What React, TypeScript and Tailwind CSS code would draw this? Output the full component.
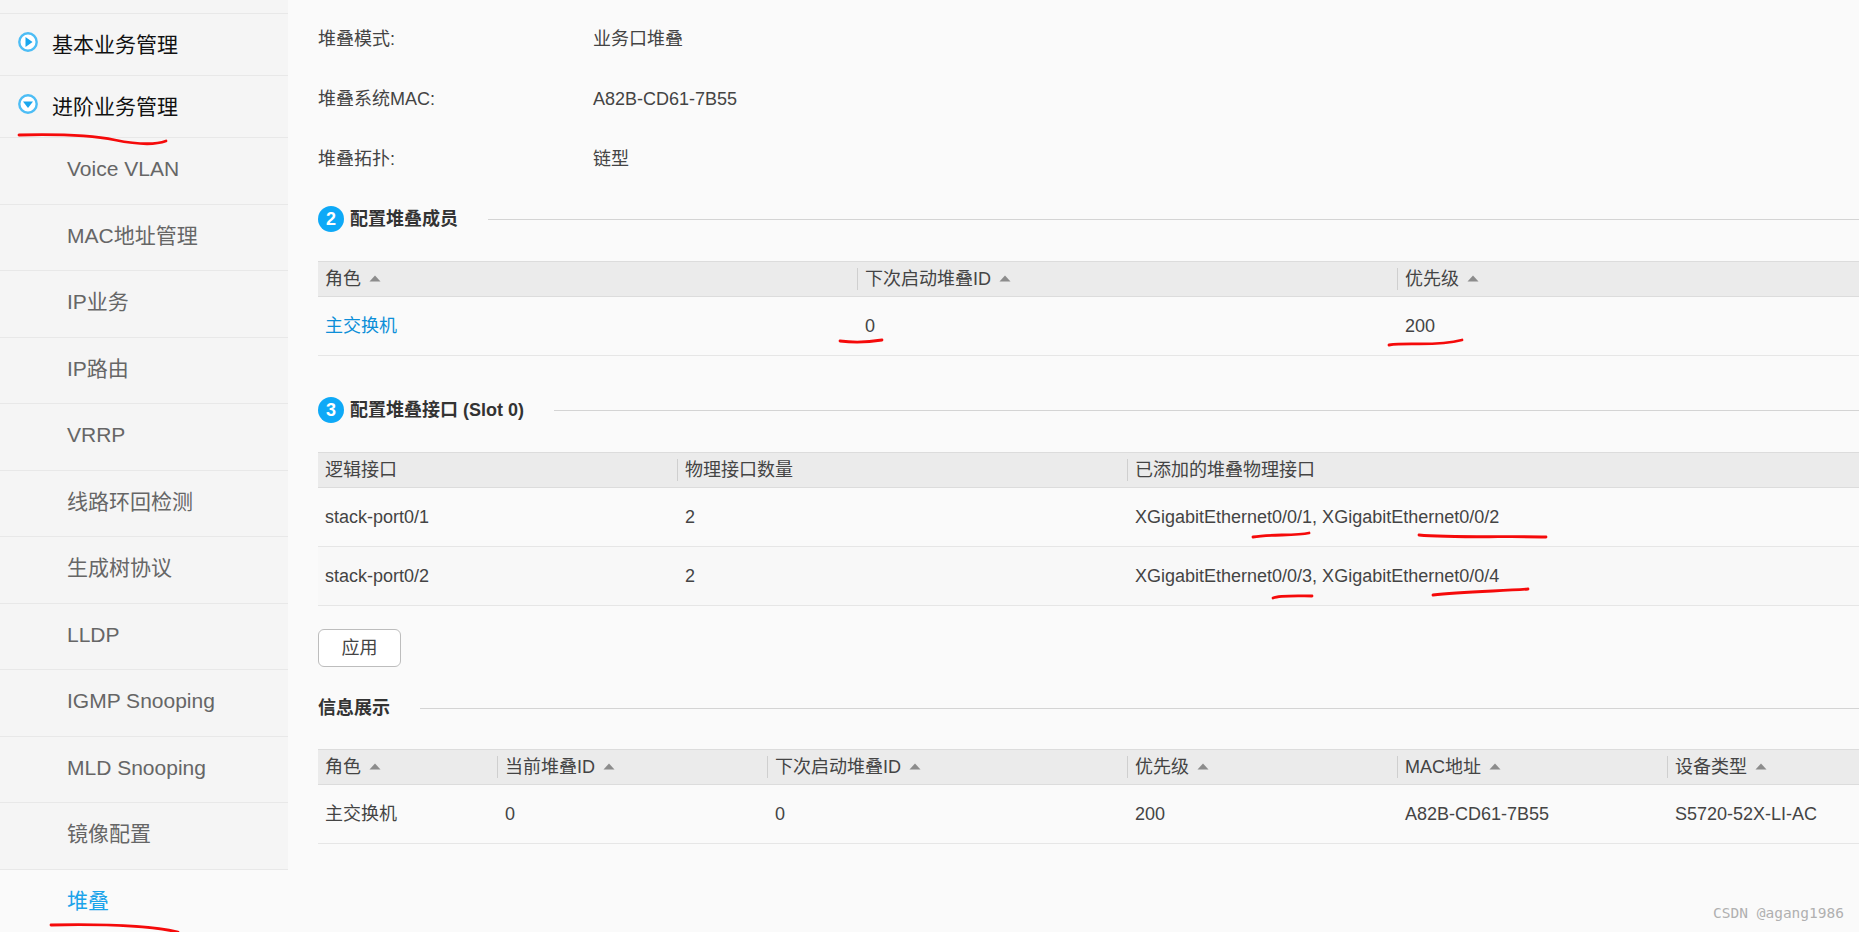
import type { ReactNode } from 'react';

const FONT = "font-['Liberation_Sans','Noto_Sans_CJK_SC',sans-serif]";

const subItems = ['Voice VLAN', 'MAC地址管理', 'IP业务', 'IP路由', 'VRRP', '线路环回检测', '生成树协议', 'LLDP', 'IGMP Snooping', 'MLD Snooping', '镜像配置'];

function CircleIcon({ dir }: { dir: 'right' | 'down' }) {
  return (
    <svg width="20" height="20" viewBox="0 0 20 20" className="shrink-0">
      <circle cx="10" cy="10" r="8.7" fill="#fff" stroke="#4dbdf5" strokeWidth="2.4" />
      {dir === 'right' ? <path d="M7.5 5 L14.5 10 L7.5 15 Z" fill="#1aa7ee" /> : <path d="M5 7.5 L15 7.5 L10 14 Z" fill="#1aa7ee" />}
    </svg>
  );
}

function SortArrow() {
  return (
    <svg width="12" height="7" viewBox="0 0 12 7" className="ml-[8px] -mt-[2px] shrink-0">
      <path d="M6 0.5 L11.5 6.5 L0.5 6.5 Z" fill="#8c8c8c" />
    </svg>
  );
}

function Sidebar() {
  return (
    <aside className="w-[288px] shrink-0 bg-[#f5f5f5] flex flex-col">
      <div className="h-[14px] shrink-0 border-b border-[#e8e8e8]" />
      <div className="h-[62px] shrink-0 border-b border-[#e8e8e8] flex items-center pl-[18px] gap-[15px] text-[21px] text-[#111]">
        <span className="-mt-[5px]"><CircleIcon dir="right" /></span>
        <span className="-ml-px">基本业务管理</span>
      </div>
      <div className="h-[62px] shrink-0 border-b border-[#e8e8e8] flex items-center pl-[18px] gap-[15px] text-[21px] text-[#111]">
        <span className="-mt-[5px]"><CircleIcon dir="down" /></span>
        <span className="-ml-px">进阶业务管理</span>
      </div>
      {subItems.map((item) => (
        <div key={item} className="h-[66.5px] shrink-0 border-b border-[#e8e8e8] flex items-center pl-[67px] pb-[4px] text-[21px] text-[#666]">
          {item}
        </div>
      ))}
      <div className="flex-1 bg-[#fafafa] pl-[67px] pt-[15px] text-[21px] text-[#1aa3ea]">堆叠</div>
    </aside>
  );
}

function InfoRow({ label, value }: { label: string; value: string }) {
  return (
    <div className="h-[60px] flex items-center text-[18px] text-[#444]">
      <span className="w-[275px]">{label}</span>
      <span>{value}</span>
    </div>
  );
}

function SectionTitle({ step, children, className }: { step?: number; children: ReactNode; className?: string }) {
  return (
    <div className={`h-[60px] flex items-center ${className ?? ''}`}>
      {step && (
        <span className="w-[26px] h-[26px] mr-[6px] rounded-full bg-[#0ea9f7] text-white text-[18px] font-bold flex items-center justify-center">
          {step}
        </span>
      )}
      <span className="text-[18px] font-bold text-[#333] whitespace-nowrap">{children}</span>
      <div className="flex-1 h-px bg-[#d4d4d4] ml-[30px]" />
    </div>
  );
}

function Table({ cols, heads, rows, sort, className }: { cols: string; heads: string[]; rows: ReactNode[][]; sort?: boolean; className?: string }) {
  return (
    <div className={`text-[18px] ${className ?? ''}`}>
      <div className={`grid ${cols} h-[36px] bg-[#ebebeb] border-y border-[#dcdcdc] items-center text-[#444]`}>
        {heads.map((h, i) => (
          <div key={h} className={`h-[22px] flex items-center pl-[7px] ${i > 0 ? 'border-l border-[#cfcfcf] -ml-px' : ''}`}>
            <span>{h}</span>
            {sort && <SortArrow />}
          </div>
        ))}
      </div>
      {rows.map((row, r) => (
        <div key={r} className={`grid ${cols} h-[59px] border-b border-[#e6e6e6] items-center text-[#444] ${r % 2 === 1 ? 'bg-[#f8f8f8]' : ''}`}>
          {row.map((cell, i) => (
            <div key={i} className="pl-[7px] whitespace-nowrap">{cell}</div>
          ))}
        </div>
      ))}
    </div>
  );
}

// hand-drawn red marks on top of the screenshot
function RedMarks() {
  const lines = [
    'M19 135 C60 134 90 135 115 140 C135 144 155 145 166 141',
    'M51 925 C100 924 150 926 178 932',
    'M840 341 C855 343 870 342 882 340',
    'M1389 345 C1410 342 1435 347 1462 340',
    'M1253 537 C1270 534 1295 536 1309 533',
    'M1419 535 C1450 538 1510 536 1546 537',
    'M1273 598 C1280 595 1300 596 1312 596',
    'M1433 595 C1460 592 1500 591 1528 589',
  ];
  return (
    <svg width="1859" height="932" className="absolute inset-0 pointer-events-none">
      {lines.map((d) => (
        <path key={d} d={d} fill="none" stroke="#f50a0a" strokeWidth="2.8" strokeLinecap="round" />
      ))}
    </svg>
  );
}

export default function App() {
  return (
    <div className={`relative w-[1859px] h-[932px] overflow-hidden flex bg-[#fafafa] ${FONT}`}>
      <Sidebar />
      <main className="flex-1 pl-[30px] pt-[9px] min-w-0">
        <InfoRow label="堆叠模式:" value="业务口堆叠" />
        <InfoRow label="堆叠系统MAC:" value="A82B-CD61-7B55" />
        <InfoRow label="堆叠拓扑:" value="链型" />
        <SectionTitle step={2}>配置堆叠成员</SectionTitle>
        <Table
          className="mt-[12px]"
          cols="grid-cols-[540px_540px_1fr]"
          sort
          heads={['角色', '下次启动堆叠ID', '优先级']}
          rows={[[<span className="text-[#0d8fd8]">主交换机</span>, '0', '200']]}
        />
        <SectionTitle step={3} className="mt-[24px]">配置堆叠接口 (Slot 0)</SectionTitle>
        <Table
          className="mt-[12px]"
          cols="grid-cols-[360px_450px_1fr]"
          heads={['逻辑接口', '物理接口数量', '已添加的堆叠物理接口']}
          rows={[
            ['stack-port0/1', '2', 'XGigabitEthernet0/0/1, XGigabitEthernet0/0/2'],
            ['stack-port0/2', '2', 'XGigabitEthernet0/0/3, XGigabitEthernet0/0/4'],
          ]}
        />
        <button className="mt-[23px] block w-[83px] h-[38px] rounded-[6px] bg-white border border-[#bdbdbd] text-[18px] text-[#444]">应用</button>
        <SectionTitle className="mt-[11px]">信息展示</SectionTitle>
        <Table
          className="mt-[11px]"
          cols="grid-cols-[180px_270px_360px_270px_270px_1fr]"
          sort
          heads={['角色', '当前堆叠ID', '下次启动堆叠ID', '优先级', 'MAC地址', '设备类型']}
          rows={[['主交换机', '0', '0', '200', 'A82B-CD61-7B55', 'S5720-52X-LI-AC']]}
        />
      </main>
      <RedMarks />
      <span className="absolute right-[15px] bottom-[7px] text-[14.5px] text-[#b0b0b0] font-['DejaVu_Sans_Mono',monospace]">CSDN @agang1986</span>
    </div>
  );
}
